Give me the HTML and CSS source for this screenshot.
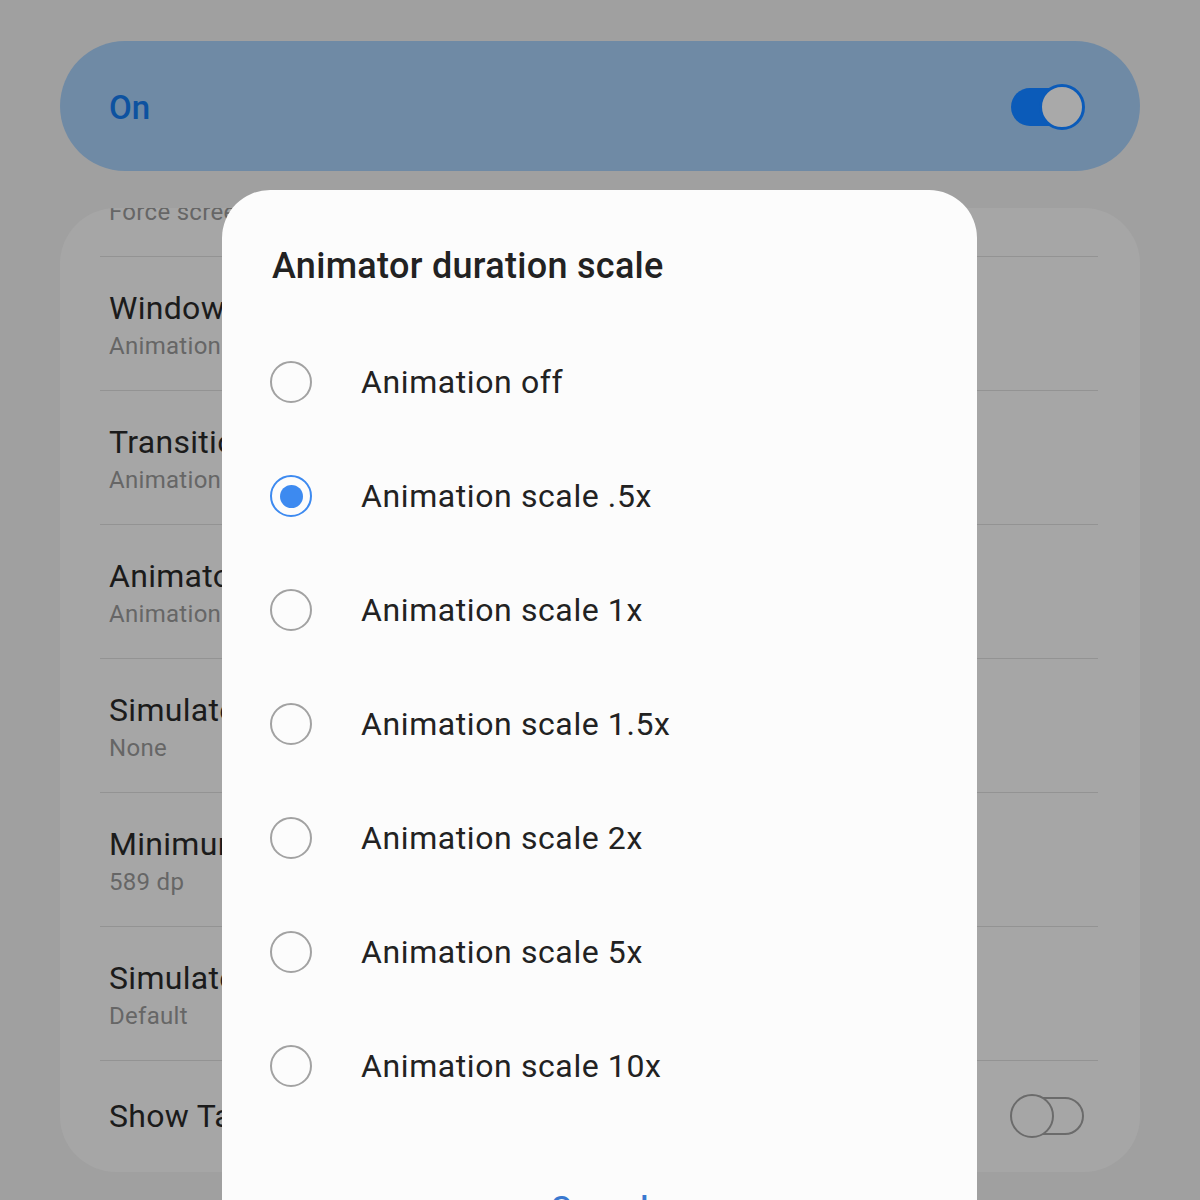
FILE: index.html
```html
<!DOCTYPE html>
<html lang="en">
<head>
<meta charset="utf-8">
<title>Animator duration scale</title>
<link rel="stylesheet" href="styles.css">
</head>
<body>
<div class="screen">
  <div class="master-bar">
    <span class="master-label">On</span>
    <span class="switch switch-on"><span class="switch-track"></span><span class="switch-thumb"></span></span>
  </div>
  <div class="card">
    <div class="list">
      <div class="item"><div class="item-text"><div class="item-title">Force screen orientation</div><div class="item-sub">Force screen orientation</div></div></div>
      <div class="item"><div class="item-text"><div class="item-title">Window animation scale</div><div class="item-sub">Animation scale .5x</div></div></div>
      <div class="item"><div class="item-text"><div class="item-title">Transition animation scale</div><div class="item-sub">Animation scale .5x</div></div></div>
      <div class="item"><div class="item-text"><div class="item-title">Animator duration scale</div><div class="item-sub">Animation scale .5x</div></div></div>
      <div class="item"><div class="item-text"><div class="item-title">Simulate secondary displays</div><div class="item-sub">None</div></div></div>
      <div class="item"><div class="item-text"><div class="item-title">Minimum width</div><div class="item-sub">589 dp</div></div></div>
      <div class="item"><div class="item-text"><div class="item-title">Simulate display with a cutout</div><div class="item-sub">Default</div></div></div>
      <div class="item item-last"><div class="item-text"><div class="item-title">Show Taps</div></div>
        <span class="switch switch-off"><span class="switch-track"></span><span class="switch-thumb"></span></span>
      </div>
    </div>
  </div>
</div>

<div class="dialog">
  <div class="dialog-title">Animator duration scale</div>
  <div class="options">
    <div class="option"><span class="radio"></span><span class="option-label">Animation off</span></div>
    <div class="option"><span class="radio radio-checked"></span><span class="option-label">Animation scale .5x</span></div>
    <div class="option"><span class="radio"></span><span class="option-label">Animation scale 1x</span></div>
    <div class="option"><span class="radio"></span><span class="option-label">Animation scale 1.5x</span></div>
    <div class="option"><span class="radio"></span><span class="option-label">Animation scale 2x</span></div>
    <div class="option"><span class="radio"></span><span class="option-label">Animation scale 5x</span></div>
    <div class="option"><span class="radio"></span><span class="option-label">Animation scale 10x</span></div>
  </div>
  <div class="dialog-footer"><span class="cancel">Cancel</span></div>
</div>
</body>
</html>
```

FILE: styles.css
```css
* { box-sizing: border-box; }

html, body {
  margin: 0;
  width: 1200px;
  height: 1200px;
  overflow: hidden;
}

body {
  background: #a0a0a0;
  font-family: Roboto, "Noto Sans", "Liberation Sans", sans-serif;
  position: relative;
}

.screen {
  padding: 41px 60px 0 60px;
}

.master-bar {
  height: 130px;
  border-radius: 65px;
  background: #6f8aa5;
  display: flex;
  align-items: center;
  justify-content: space-between;
  padding: 2px 55px 0 49px;
}

.master-label {
  font-size: 33px;
  font-weight: 500;
  color: #0d52a0;
}

.switch {
  position: relative;
  display: inline-block;
  width: 74px;
  height: 46px;
  flex: none;
}

.switch-track {
  position: absolute;
  top: 4px;
  height: 38px;
  border-radius: 19px;
}

.switch-thumb {
  position: absolute;
  top: 0;
  width: 46px;
  height: 46px;
  border-radius: 50%;
}

.switch-on .switch-track {
  left: 0;
  width: 66px;
  background: #0b5bb9;
}

.switch-on .switch-thumb {
  right: 0;
  background: #a9a9a9;
  border: 3px solid #0b5bb9;
}

.switch-off .switch-track {
  left: 4px;
  width: 70px;
  border: 2.5px solid #6b6b6b;
}

.switch-off .switch-thumb {
  left: 0;
  width: 44px;
  height: 44px;
  top: 1px;
  border: 2.5px solid #6b6b6b;
  background: #a6a6a6;
}

.card {
  margin-top: 37px;
  height: 964px;
  background: #a6a6a6;
  border-radius: 56px;
  overflow: hidden;
  padding: 0 42px 0 40px;
}

.list {
  margin-top: -85px;
}

.item {
  display: flex;
  align-items: center;
  justify-content: space-between;
  padding: 31px 0 30px 9px;
  border-bottom: 1px solid #939393;
  white-space: nowrap;
}

.item-last {
  border-bottom: none;
  padding-top: 32px;
  padding-right: 14px;
}

.item-title {
  font-size: 32px;
  line-height: 40px;
  letter-spacing: 0.3px;
  color: #1b1b1b;
}

.item-sub {
  font-size: 24px;
  line-height: 32px;
  letter-spacing: 0.3px;
  padding-top: 2px;
  margin-bottom: -2px;
  color: #666666;
}

.dialog {
  position: absolute;
  left: 222px;
  top: 190px;
  width: 755px;
  height: 1100px;
  background: #fcfcfc;
  border-radius: 48px;
  padding: 52px 0 0 0;
}

.dialog-title {
  padding-left: 50px;
  font-size: 36px;
  line-height: 48px;
  font-weight: 500;
  letter-spacing: 0.3px;
  color: #222222;
}

.options {
  margin-top: 35px;
}

.option {
  height: 114px;
  display: flex;
  align-items: center;
  padding-left: 48px;
}

.radio {
  width: 42px;
  height: 42px;
  border-radius: 50%;
  border: 2px solid #a2a2a2;
  flex: none;
  display: flex;
  align-items: center;
  justify-content: center;
}

.radio-checked {
  border: 2.5px solid #3d8af0;
}

.radio-checked::after {
  content: "";
  width: 23px;
  height: 23px;
  border-radius: 50%;
  background: #3d8af0;
}

.option-label {
  margin-left: 49px;
  font-size: 32px;
  letter-spacing: 0.6px;
  color: #222222;
}

.dialog-footer {
  padding-top: 64px;
  text-align: center;
}

.cancel {
  font-size: 32px;
  line-height: 40px;
  font-weight: 500;
  color: #3a78d0;
}
```
